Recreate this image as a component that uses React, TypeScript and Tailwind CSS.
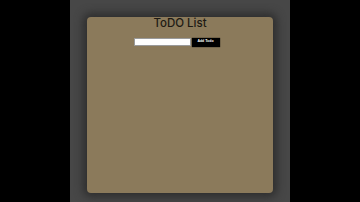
export default function App() {
  return (
    <div className="w-[360px] h-[202px] bg-black flex justify-center overflow-hidden">
      <div className="w-[220px] h-full bg-[#474747] pt-[17px] px-[17px]">
        <div className="h-[176px] bg-[#8b7a5b] rounded-[4px] shadow-[0_0_8px_4px_#2e2e2e] flex flex-col items-center" style={{ fontFamily: '"Liberation Sans", Arial, sans-serif' }}>
          <h1 className="text-[11.5px] leading-none mt-[1px] text-[#1e1a14] font-medium" style={{ fontFamily: 'Inter, sans-serif' }}>ToDO List</h1>
          <div className="flex items-center mt-[8px] mr-[7px] gap-[1px]">
            <div className="w-[57px] h-[8px] bg-white border border-[#9a9a9a]"></div>
            <div className="w-[28px] h-[9px] bg-black text-white text-[3.5px] font-bold flex items-center justify-center shadow-[0_0_1px_#000]">Add Todo</div>
          </div>
        </div>
      </div>
    </div>
  );
}
